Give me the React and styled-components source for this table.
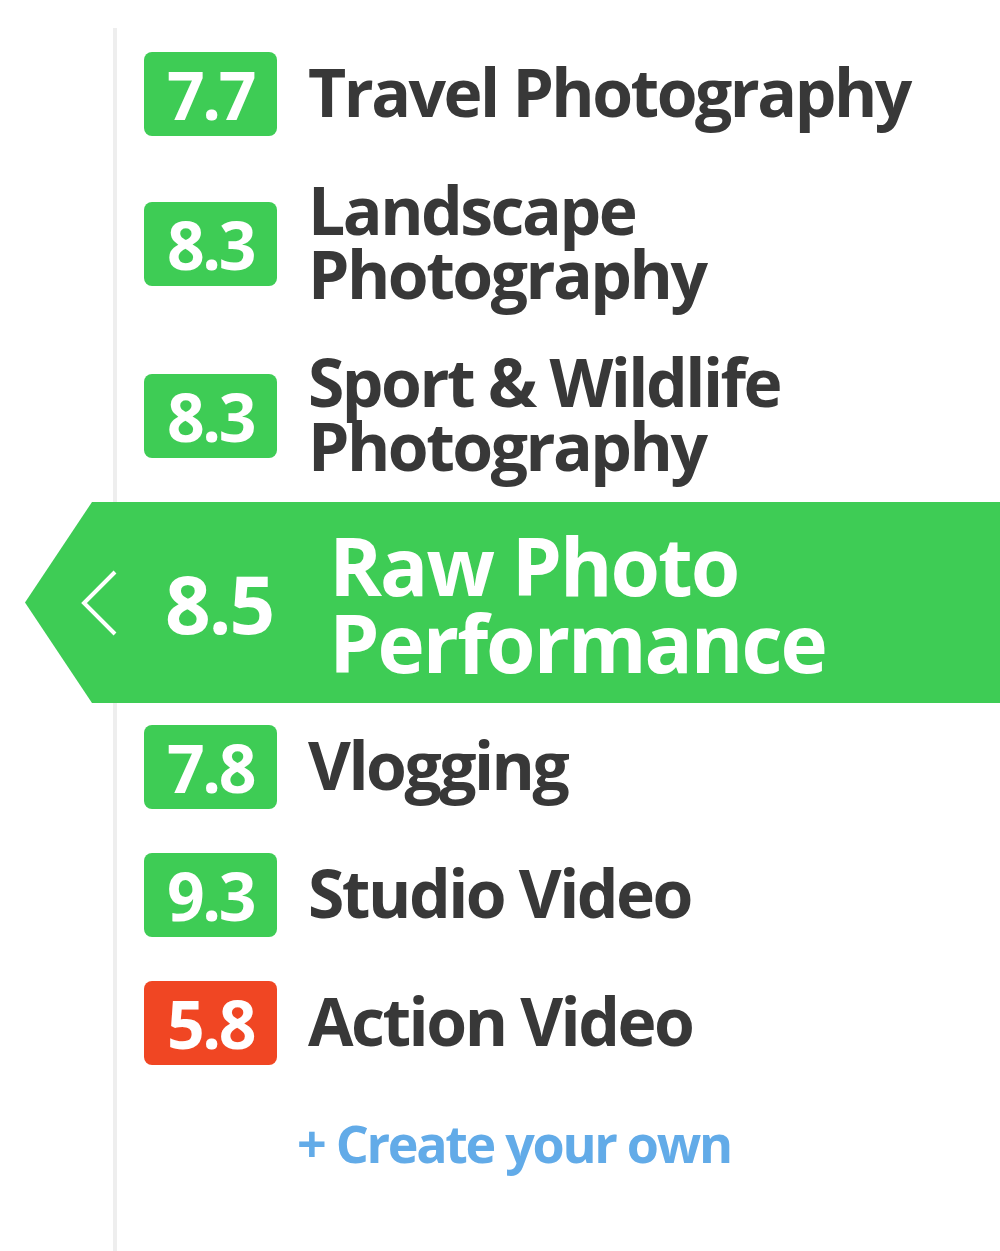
import React from "react";
import styled, { createGlobalStyle } from "styled-components";

const Global = createGlobalStyle`
  html, body { margin: 0; padding: 0; background: #ffffff; }
  body { font-family: "Open Sans", "Noto Sans", Arial, sans-serif; overflow: hidden; }
`;

const Page = styled.div`
  width: 1000px;
  height: 1251px;
  padding-top: 28px;
  box-sizing: border-box;
  overflow: hidden;
`;

const Rail = styled.nav`
  margin-left: 113px;
  border-left: 4px solid #eeeeee;
  min-height: 1223px;
  padding-top: 2px;
  box-sizing: border-box;
  display: flex;
  flex-direction: column;
`;

const Row = styled.div`
  display: flex;
  align-items: center;
  gap: 31px;
  padding: 22px 0 22px 27px;
`;

const Badge = styled.span`
  flex: none;
  width: 133px;
  height: 84px;
  border-radius: 8px;
  background: ${(p) => (p.$bad ? "#f04623" : "#3ecc55")};
  color: #ffffff;
  font-size: 66px;
  font-weight: 700;
  letter-spacing: -2.5px;
  display: flex;
  align-items: center;
  justify-content: center;
  line-height: 1;
`;

const Label = styled.span`
  position: relative;
  top: -3px;
  color: #383838;
  font-size: 66px;
  font-weight: 700;
  line-height: 64px;
  letter-spacing: -2.5px;
  max-width: 650px;
`;

const ActiveRow = styled.div`
  margin-left: -92px;
  height: 201px;
  background: #3ecc55;
  clip-path: polygon(67px 0, 100% 0, 100% 100%, 67px 100%, 0 50%);
  display: flex;
  align-items: center;
  padding-left: 55px;
  color: #ffffff;
`;

const Chevron = styled.svg`
  flex: none;
  width: 38px;
  height: 66px;
  margin-right: 47px;
`;

const ActiveScore = styled.span`
  flex: none;
  font-size: 80px;
  font-weight: 700;
  letter-spacing: -2px;
  line-height: 1;
  margin-right: 56px;
`;

const ActiveLabel = styled.span`
  font-size: 80px;
  font-weight: 700;
  line-height: 77px;
  letter-spacing: -2px;
  max-width: 560px;
`;

const CreateLink = styled.a`
  align-self: flex-start;
  margin: 30px 0 0 180px;
  color: #62abe8;
  font-size: 52px;
  font-weight: 700;
  letter-spacing: -2.3px;
  text-decoration: none;
  line-height: 1;
`;

const items = [
  { score: "7.7", label: "Travel Photography" },
  { score: "8.3", label: "Landscape Photography" },
  { score: "8.3", label: "Sport & Wildlife Photography" },
  { score: "8.5", label: "Raw Photo Performance", active: true },
  { score: "7.8", label: "Vlogging" },
  { score: "9.3", label: "Studio Video" },
  { score: "5.8", label: "Action Video", bad: true },
];

export default function App() {
  return (
    <Page>
      <Global />
      <Rail>
        {items.map((it) =>
          it.active ? (
            <ActiveRow key={it.label}>
              <Chevron viewBox="0 0 38 66" fill="none">
                <path d="M35 2 L4 33 L35 64" stroke="#fff" strokeWidth="4" />
              </Chevron>
              <ActiveScore>{it.score}</ActiveScore>
              <ActiveLabel>{it.label}</ActiveLabel>
            </ActiveRow>
          ) : (
            <Row key={it.label}>
              <Badge $bad={it.bad}>{it.score}</Badge>
              <Label>{it.label}</Label>
            </Row>
          )
        )}
        <CreateLink href="#">+ Create your own</CreateLink>
      </Rail>
    </Page>
  );
}
